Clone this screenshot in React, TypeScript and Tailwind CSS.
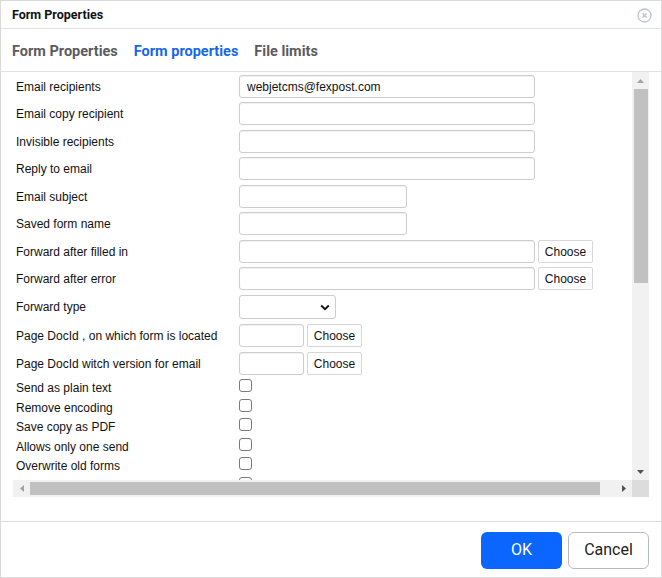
import React from "react";

const arial = { fontFamily: '"Liberation Sans", Arial, sans-serif' };
const ui = { fontFamily: 'Roboto, "Noto Sans", sans-serif' };

function TextInput({ w, value }: { w: number; value?: string }) {
  return (
    <div
      className="h-[23px] border border-[#cdcdcd] rounded-[3px] bg-white flex items-center pl-[7px] text-[12px] text-[#111] shadow-[inset_0_1px_1px_rgba(0,0,0,0.06)]"
      style={{ width: w }}
    >
      {value}
    </div>
  );
}

function ChooseBtn() {
  return (
    <div className="h-[23px] w-[55px] border border-[#d6d6d6] rounded-[2px] bg-white flex items-center justify-center text-[12px] text-[#111]">
      Choose
    </div>
  );
}

function Row({
  label,
  h,
  children,
}: {
  label: string;
  h: number;
  children: React.ReactNode;
}) {
  return (
    <div className="flex items-start" style={{ height: h }}>
      <div className="w-[223px] shrink-0 pt-[1px] leading-[23px] text-[12px] text-[#111] whitespace-nowrap">
        {label}
      </div>
      <div className="flex items-start gap-[3px]">{children}</div>
    </div>
  );
}

function CheckRow({ label, h }: { label: string; h: number }) {
  return (
    <div className="flex items-start" style={{ height: h }}>
      <div className="w-[223px] shrink-0 leading-[16px] text-[12px] text-[#111] whitespace-nowrap">
        {label}
      </div>
      <div className="w-[13px] h-[13px] -mt-[1px] border border-[#7a7a7a] rounded-[3px] bg-white" />
    </div>
  );
}

export default function App() {
  return (
    <div className="w-[662px] h-[578px] bg-white border border-[#dadada] flex flex-col overflow-hidden" style={ui}>
      {/* header */}
      <div className="h-[28px] shrink-0 border-b border-[#e2e2e2] flex items-center justify-between pl-[11px] pr-[9px] pt-[2px]">
        <div className="text-[12.5px] font-bold text-[#111]">Form Properties</div>
        <svg width="15" height="15" viewBox="0 0 15 15">
          <circle cx="7.5" cy="7.5" r="6.5" fill="none" stroke="#bcc3d3" strokeWidth="1.3" />
          <path d="M5.5 5.5 L9.5 9.5 M9.5 5.5 L5.5 9.5" stroke="#bcc3d3" strokeWidth="1.5" />
        </svg>
      </div>
      {/* tabs */}
      <div className="h-[43px] shrink-0 border-b border-[#e2e2e2] flex items-center gap-[16px] pl-[11px] pt-[3px] text-[14.5px] font-bold">
        <span className="text-[#5b5b5f]">Form Properties</span>
        <span className="text-[#1767e6]">Form properties</span>
        <span className="text-[#5b5b5f]">File limits</span>
      </div>
      {/* body */}
      <div className="flex flex-col pl-[12px] pr-[12px]">
        <div className="h-[408px] flex">
          <div className="flex-1 overflow-hidden pl-[3px] pt-[3px]" style={arial}>
            <Row label="Email recipients" h={27}>
              <TextInput w={296} value="webjetcms@fexpost.com" />
            </Row>
            <Row label="Email copy recipient" h={28}>
              <TextInput w={296} />
            </Row>
            <Row label="Invisible recipients" h={27}>
              <TextInput w={296} />
            </Row>
            <Row label="Reply to email" h={28}>
              <TextInput w={296} />
            </Row>
            <Row label="Email subject" h={27}>
              <TextInput w={168} />
            </Row>
            <Row label="Saved form name" h={28}>
              <TextInput w={168} />
            </Row>
            <Row label="Forward after filled in" h={27}>
              <TextInput w={296} />
              <ChooseBtn />
            </Row>
            <Row label="Forward after error" h={28}>
              <TextInput w={296} />
              <ChooseBtn />
            </Row>
            <Row label="Forward type" h={29}>
              <div className="h-[24px] w-[97px] border border-[#cdcdcd] rounded-[3px] bg-white flex items-center justify-end pr-[5px]">
                <svg width="10" height="7" viewBox="0 0 10 7">
                  <path d="M1.2 1.5 L5 5.2 L8.8 1.5" fill="none" stroke="#111" strokeWidth="1.8" />
                </svg>
              </div>
            </Row>
            <Row label="Page DocId , on which form is located" h={28}>
              <TextInput w={65} />
              <ChooseBtn />
            </Row>
            <Row label="Page DocId witch version for email" h={27}>
              <TextInput w={65} />
              <ChooseBtn />
            </Row>
            <div className="h-[1px]" />
            <CheckRow label="Send as plain text" h={20} />
            <CheckRow label="Remove encoding" h={19} />
            <CheckRow label="Save copy as PDF" h={20} />
            <CheckRow label="Allows only one send" h={19} />
            <CheckRow label="Overwrite old forms" h={20} />
            <CheckRow label="" h={20} />
          </div>
          {/* vertical scrollbar */}
          <div className="w-[17px] shrink-0 bg-[#f1f1f1] flex flex-col items-center">
            <div className="h-[17px] w-full flex items-center justify-center">
              <svg width="7" height="4" viewBox="0 0 7 4">
                <path d="M0 4 L3.5 0 L7 4 Z" fill="#a3a3a3" />
              </svg>
            </div>
            <div className="w-[14px] h-[194px] bg-[#c1c1c1]" />
            <div className="flex-1" />
            <div className="h-[17px] w-full flex items-center justify-center">
              <svg width="7" height="4" viewBox="0 0 7 4">
                <path d="M0 0 L3.5 4 L7 0 Z" fill="#505050" />
              </svg>
            </div>
          </div>
        </div>
        {/* horizontal scrollbar */}
        <div className="h-[17px] flex">
          <div className="flex-1 bg-[#f1f1f1] flex items-center">
            <div className="w-[17px] h-full flex items-center justify-center">
              <svg width="4" height="7" viewBox="0 0 4 7">
                <path d="M4 0 L0 3.5 L4 7 Z" fill="#a3a3a3" />
              </svg>
            </div>
            <div className="w-[570px] h-[13px] bg-[#c1c1c1]" />
            <div className="flex-1" />
            <div className="w-[17px] h-full flex items-center justify-center">
              <svg width="4" height="7" viewBox="0 0 4 7">
                <path d="M0 0 L4 3.5 L0 7 Z" fill="#505050" />
              </svg>
            </div>
          </div>
          <div className="w-[17px] bg-[#dcdcdc]" />
        </div>
      </div>
      <div className="flex-1" />
      {/* footer */}
      <div className="h-[56px] shrink-0 border-t border-[#dcdcdc] flex items-center justify-end gap-[6px] pr-[12px] pt-[1px]">
        <div className="w-[81px] h-[37px] rounded-[6px] bg-[#0a66ff] text-white text-[16px] flex items-center justify-center">
          OK
        </div>
        <div className="w-[81px] h-[37px] rounded-[6px] border border-[#b4b9c6] bg-white text-[#222] text-[16px] flex items-center justify-center">
          Cancel
        </div>
      </div>
    </div>
  );
}
